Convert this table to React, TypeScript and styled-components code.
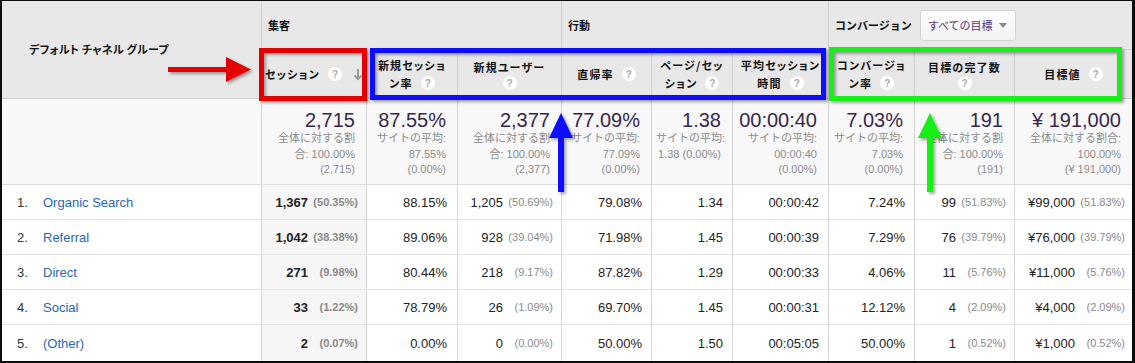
import React from 'react';
import styled, { createGlobalStyle } from 'styled-components';

const GlobalStyle = createGlobalStyle`
  * {
    box-sizing: border-box;
  }
  body {
    margin: 0;
    background: #fff;
    font-family: 'Liberation Sans', Arial, 'Noto Sans CJK JP', sans-serif;
  }
`;

const COLS = '259px 105px 91px 104px 90px 81px 96px 86px 100px 118px';

const Page = styled.div`
  position: relative;
  width: 1135px;
  height: 363px;
`;

const Frame = styled.div`
  width: 1135px;
  height: 363px;
  border: solid #0c0c0c;
  border-width: 1px 3px 2px 2px;
  background: #fff;
  overflow: hidden;
`;

const HeaderGrid = styled.div`
  display: grid;
  grid-template-columns: ${COLS};
  grid-template-rows: 49px 49px;
  background: #e8e8e8;
`;

const DimHead = styled.div`
  grid-row: 1 / 3;
  display: flex;
  align-items: center;
  padding: 0 0 2px 27px;
  border-bottom: 1px solid #cfcfcf;
  font: bold 11px 'Noto Sans CJK JP', sans-serif;
  font-feature-settings: 'palt';
  letter-spacing: 0.2px;
  color: #111;
`;

const GroupHead = styled.div`
  grid-column: span 3;
  display: flex;
  align-items: center;
  gap: 8px;
  padding-left: 6px;
  border-left: 1px solid #cfcfcf;
  border-bottom: 1px solid #d6d6d6;
  font: bold 11px 'Noto Sans CJK JP', sans-serif;
  color: #111;
`;

const Dropdown = styled.div`
  width: 96px;
  height: 31px;
  display: flex;
  align-items: center;
  justify-content: space-between;
  padding: 0 8px 0 7px;
  border: 1px solid #d3d3d3;
  border-radius: 3px;
  background: linear-gradient(#fdfdfd, #f2f2f2);
  font: 11px 'Noto Sans CJK JP', sans-serif;
  font-weight: normal;
  color: #56357f;
  white-space: nowrap;
`;

const SubHead = styled.div`
  display: flex;
  flex-direction: column;
  align-items: center;
  justify-content: center;
  border-left: 1px solid #cfcfcf;
  border-bottom: 1px solid #cfcfcf;
  font: bold 11px 'Noto Sans CJK JP', sans-serif;
  font-feature-settings: 'palt';
  letter-spacing: 1.2px;
  line-height: 18px;
  color: #111;
  text-align: center;
`;

const HeadLine = styled.div`
  display: flex;
  align-items: center;
  justify-content: center;
  white-space: nowrap;
`;

const Help = styled.span<{ $alone?: boolean }>`
  display: inline-flex;
  align-items: center;
  justify-content: center;
  width: 14px;
  height: 14px;
  margin-left: ${(p) => (p.$alone ? '0' : '8px')};
  border-radius: 50%;
  background: #fff;
  font: bold 10px 'Liberation Sans', Arial, sans-serif;
  letter-spacing: 0;
  color: #aaa;
`;

const SortArrow = styled.svg`
  margin-left: 11px;
`;

const SummaryRow = styled.div`
  display: grid;
  grid-template-columns: ${COLS};
  height: 86px;
  background: #f8f8f8;
  border-bottom: 1px solid #dcdcdc;
`;

const SummaryCell = styled.div<{ $first?: boolean }>`
  padding: 10px 11px 0 4px;
  border-left: ${(p) => (p.$first ? 'none' : '1px solid #d2d2d2')};
  text-align: right;
`;

const Big = styled.div`
  font-size: 20px;
  line-height: 22px;
  color: #36284d;
  white-space: nowrap;
`;

const Small = styled.div`
  font-size: 11px;
  line-height: 15.5px;
  color: #8c8c8c;
  white-space: nowrap;
`;

const DataRow = styled.div<{ $last?: boolean }>`
  display: grid;
  grid-template-columns: ${COLS};
  height: ${(p) => (p.$last ? '36px' : '35px')};
  border-bottom: ${(p) => (p.$last ? 'none' : '1px solid #e3e3e3')};
  font-size: 13px;
`;

const DimCell = styled.div`
  display: flex;
  align-items: center;
  padding-left: 15px;
`;

const Index = styled.span`
  width: 26px;
  color: #333;
`;

const ChannelLink = styled.a`
  color: #2767b5;
  text-decoration: none;
`;

const ValueCell = styled.div<{ $sorted?: boolean; $pr: number }>`
  display: flex;
  align-items: center;
  justify-content: flex-end;
  padding-right: ${(p) => p.$pr}px;
  border-left: 1px solid #d4d4d4;
  background: ${(p) => (p.$sorted ? '#f6f6f6' : 'transparent')};
  font-weight: ${(p) => (p.$sorted ? 'bold' : 'normal')};
  color: #222;
  white-space: nowrap;
`;

const Pct = styled.span`
  display: inline-block;
  width: 45px;
  margin-left: 5px;
  text-align: right;
  font-size: 11px;
  color: #8a8a8a;
`;

const Overlay = styled.svg`
  position: absolute;
  left: 0;
  top: 0;
  pointer-events: none;
`;

type Token = string | '?' | 'sort';

const subHeads: Token[][][] = [
  [['セッション', '?', 'sort']],
  [['新規セッショ'], ['ン率', '?']],
  [['新規ユーザー'], ['?']],
  [['直帰率', '?']],
  [['ページ/セッ'], ['ション', '?']],
  [['平均セッション'], ['時間', '?']],
  [['コンバージョ'], ['ン率', '?']],
  [['目標の完了数'], ['?']],
  [['目標値', '?']],
];

const summary: { big: string; lines: string[] }[] = [
  { big: '2,715', lines: ['全体に対する割', '合: 100.00%', '(2,715)'] },
  { big: '87.55%', lines: ['サイトの平均:', '87.55%', '(0.00%)'] },
  { big: '2,377', lines: ['全体に対する割', '合: 100.00%', '(2,377)'] },
  { big: '77.09%', lines: ['サイトの平均:', '77.09%', '(0.00%)'] },
  { big: '1.38', lines: ['サイトの平均:', '1.38 (0.00%)'] },
  { big: '00:00:40', lines: ['サイトの平均:', '00:00:40', '(0.00%)'] },
  { big: '7.03%', lines: ['サイトの平均:', '7.03%', '(0.00%)'] },
  { big: '191', lines: ['全体に対する割', '合: 100.00%', '(191)'] },
  { big: '¥ 191,000', lines: ['全体に対する割合:', '100.00%', '(¥ 191,000)'] },
];

// value, or [value, share]
type Cell = string | [string, string];

const rows: { name: string; cells: Cell[] }[] = [
  {
    name: 'Organic Search',
    cells: [['1,367', '(50.35%)'], '88.15%', ['1,205', '(50.69%)'], '79.08%', '1.34', '00:00:42', '7.24%', ['99', '(51.83%)'], ['¥99,000', '(51.83%)']],
  },
  {
    name: 'Referral',
    cells: [['1,042', '(38.38%)'], '89.06%', ['928', '(39.04%)'], '71.98%', '1.45', '00:00:39', '7.29%', ['76', '(39.79%)'], ['¥76,000', '(39.79%)']],
  },
  {
    name: 'Direct',
    cells: [['271', '(9.98%)'], '80.44%', ['218', '(9.17%)'], '87.82%', '1.29', '00:00:33', '4.06%', ['11', '(5.76%)'], ['¥11,000', '(5.76%)']],
  },
  {
    name: 'Social',
    cells: [['33', '(1.22%)'], '78.79%', ['26', '(1.09%)'], '69.70%', '1.45', '00:00:31', '12.12%', ['4', '(2.09%)'], ['¥4,000', '(2.09%)']],
  },
  {
    name: '(Other)',
    cells: [['2', '(0.07%)'], '0.00%', ['0', '(0.00%)'], '50.00%', '1.50', '00:05:05', '50.00%', ['1', '(0.52%)'], ['¥1,000', '(0.52%)']],
  },
];

const cellPadding = [8, 10, 8, 9, 9, 9, 9, 8, 7];

const renderLine = (tokens: Token[], key: number) => (
  <HeadLine key={key}>
    {tokens.map((t, i) => {
      if (t === '?') {
        return (
          <Help key={i} $alone={tokens.length === 1}>
            ?
          </Help>
        );
      }
      if (t === 'sort') {
        return (
          <SortArrow key={i} width="10" height="13" viewBox="0 0 10 13">
            <path d="M5 1 V11 M1.5 7.5 L5 11 L8.5 7.5" stroke="#9a9a9a" strokeWidth="2" fill="none" />
          </SortArrow>
        );
      }
      return <span key={i}>{t}</span>;
    })}
  </HeadLine>
);

const Annotations = () => (
  <Overlay width="1135" height="363" viewBox="0 0 1135 363">
    <defs>
      <filter id="shadow" x="-10%" y="-10%" width="130%" height="140%">
        <feDropShadow dx="2" dy="2" stdDeviation="1.5" floodColor="#000" floodOpacity="0.35" />
      </filter>
    </defs>
    <g filter="url(#shadow)">
      <rect x="261.5" y="50.5" width="103" height="48" fill="none" stroke="#e30000" strokeWidth="5" />
      <rect x="372.5" y="50.5" width="451" height="47" fill="none" stroke="#0a0aff" strokeWidth="5" />
      <rect x="831.5" y="49.5" width="288" height="49" fill="none" stroke="#16f016" strokeWidth="5" />
      <rect x="168" y="67" width="60" height="5" fill="#e30000" />
      <polygon points="226,57 251,69.5 226,82" fill="#e30000" />
      <rect x="558" y="136" width="6" height="56" fill="#0a0aff" />
      <polygon points="561,113 573,138 549,138" fill="#0a0aff" />
      <rect x="927" y="136" width="6" height="56" fill="#16f016" />
      <polygon points="930,113 942,138 918,138" fill="#16f016" />
    </g>
  </Overlay>
);

const App = () => {
  return (
    <Page>
      <GlobalStyle />
      <Frame>
        <HeaderGrid>
          <DimHead>デフォルト チャネル グループ</DimHead>
          <GroupHead>集客</GroupHead>
          <GroupHead>行動</GroupHead>
          <GroupHead>
            コンバージョン
            <Dropdown>
              すべての目標
              <svg width="8" height="5" viewBox="0 0 8 5">
                <polygon points="0,0 8,0 4,5" fill="#8a8a8a" />
              </svg>
            </Dropdown>
          </GroupHead>
          {subHeads.map((lines, i) => (
            <SubHead key={i}>{lines.map(renderLine)}</SubHead>
          ))}
        </HeaderGrid>

        <SummaryRow>
          <SummaryCell $first />
          {summary.map((s, i) => (
            <SummaryCell key={i}>
              <Big>{s.big}</Big>
              {s.lines.map((l, j) => (
                <Small key={j}>{l}</Small>
              ))}
            </SummaryCell>
          ))}
        </SummaryRow>

        {rows.map((row, r) => (
          <DataRow key={row.name} $last={r === rows.length - 1}>
            <DimCell>
              <Index>{r + 1}.</Index>
              <ChannelLink href="#">{row.name}</ChannelLink>
            </DimCell>
            {row.cells.map((c, i) => (
              <ValueCell key={i} $sorted={i === 0} $pr={cellPadding[i]}>
                {typeof c === 'string' ? (
                  c
                ) : (
                  <>
                    {c[0]}
                    <Pct>{c[1]}</Pct>
                  </>
                )}
              </ValueCell>
            ))}
          </DataRow>
        ))}
      </Frame>
      <Annotations />
    </Page>
  );
};

export default App;
